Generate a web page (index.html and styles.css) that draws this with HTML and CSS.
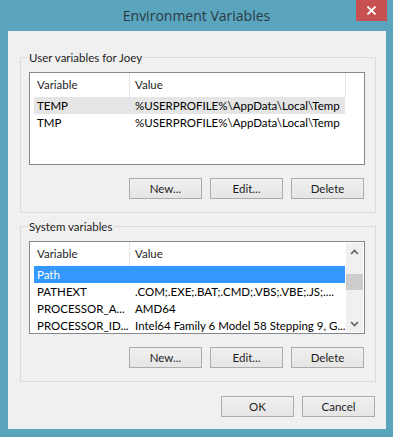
FILE: index.html
```html
<!DOCTYPE html>
<html>
<head>
<meta charset="utf-8">
<link rel="stylesheet" href="styles.css">
</head>
<body>
<div class="window">
  <div class="titlebar">
    <div class="tb-side"></div>
    <div class="title">Environment Variables</div>
    <div class="tb-side tb-right">
      <div class="close">
        <svg width="11" height="9" viewBox="0 0 11 9"><path d="M1.5 0.5 L9.5 8.5 M9.5 0.5 L1.5 8.5" stroke="#fff" stroke-width="1.8" fill="none"/></svg>
      </div>
    </div>
  </div>
  <div class="client">
    <div class="group group-user">
      <div class="legend">User variables for Joey</div>
      <div class="listview lv-user">
        <div class="lv-head">
          <div class="col c1">Variable</div>
          <div class="col c2 hdiv">Value</div>
          <div class="hdiv-end"></div>
        </div>
        <div class="row hover"><div class="col c1">TEMP</div><div class="col c2">%USERPROFILE%\AppData\Local\Temp</div></div>
        <div class="row"><div class="col c1">TMP</div><div class="col c2">%USERPROFILE%\AppData\Local\Temp</div></div>
      </div>
      <div class="btnrow">
        <div class="btn">New...</div>
        <div class="btn">Edit...</div>
        <div class="btn">Delete</div>
      </div>
    </div>
    <div class="group group-sys">
      <div class="legend">System variables</div>
      <div class="listview lv-sys">
        <div class="lv-main">
          <div class="lv-head">
            <div class="col c1">Variable</div>
            <div class="col c2 hdiv">Value</div>
          </div>
          <div class="row selected"><div class="col c1">Path</div><div class="col c2"></div></div>
          <div class="row"><div class="col c1">PATHEXT</div><div class="col c2">.COM;.EXE;.BAT;.CMD;.VBS;.VBE;.JS;....</div></div>
          <div class="row"><div class="col c1">PROCESSOR_A...</div><div class="col c2">AMD64</div></div>
          <div class="row"><div class="col c1">PROCESSOR_ID...</div><div class="col c2">Intel64 Family 6 Model 58 Stepping 9, G...</div></div>
        </div>
        <div class="scrollbar">
          <div class="arrow">
            <svg width="9" height="6" viewBox="0 0 9 6"><path d="M1 5 L4.5 1.5 L8 5" stroke="#606060" stroke-width="1.6" fill="none"/></svg>
          </div>
          <div class="track">
            <div class="thumb"></div>
          </div>
          <div class="arrow">
            <svg width="9" height="6" viewBox="0 0 9 6"><path d="M1 1 L4.5 4.5 L8 1" stroke="#606060" stroke-width="1.6" fill="none"/></svg>
          </div>
        </div>
      </div>
      <div class="btnrow">
        <div class="btn">New...</div>
        <div class="btn">Edit...</div>
        <div class="btn">Delete</div>
      </div>
    </div>
    <div class="dlgbtns">
      <div class="btn">OK</div>
      <div class="btn">Cancel</div>
    </div>
  </div>
</div>
</body>
</html>
```

FILE: styles.css
```css
html, body {
  margin: 0;
  padding: 0;
}
body {
  background: #5aa4be;
  font-family: Lato, "Liberation Sans", sans-serif;
  font-size: 11.5px;
  color: #000;
  width: 393px;
  height: 437px;
  overflow: hidden;
}
.window {
  display: flex;
  flex-direction: column;
  height: 437px;
}
.titlebar {
  height: 31px;
  display: grid;
  grid-template-columns: 1fr auto 1fr;
  padding: 0 6px;
}
.title {
  font-family: "Open Sans", "Noto Sans", sans-serif;
  font-size: 14px;
  color: #2b3a42;
  line-height: 31px;
}
.tb-right {
  display: flex;
  justify-content: flex-end;
}
.close {
  width: 31px;
  height: 21px;
  background: #c75050;
  display: flex;
  align-items: center;
  justify-content: center;
}
.client {
  margin: 0 7px 0 8px;
  height: 398px;
  background: #f0f0f0;
  display: flex;
  flex-direction: column;
  padding: 26px 10px 0 12px;
  box-sizing: border-box;
}
.group {
  border: 1px solid #dcdcdc;
  display: flex;
  flex-direction: column;
  padding: 0 10px 13px 8px;
}
.group-sys {
  margin-top: 13px;
}
.legend {
  align-self: flex-start;
  margin: -8px 0 0 -1px;
  padding: 0 2px 0 1px;
  background: #f0f0f0;
  line-height: 15px;
  height: 15px;
  color: #1e1e1e;
}
.listview {
  border: 1px solid #828790;
  background: #fff;
  height: 93px;
  box-sizing: border-box;
  margin-top: 7px;
}
.lv-sys {
  display: flex;
}
.lv-main {
  flex: 1;
  min-width: 0;
}
.lv-head {
  display: flex;
  height: 24px;
  align-items: center;
  padding-left: 4px;
}
.col {
  padding-left: 3px;
  box-sizing: border-box;
  white-space: nowrap;
  overflow: hidden;
}
.c1 {
  width: 95px;
}
.c2 {
  width: 216px;
}
.lv-head .col {
  color: #1e1e1e;
  height: 24px;
  line-height: 24px;
}
.hdiv {
  border-left: 1px solid #e5e5e5;
  padding-left: 5px;
}
.hdiv-end {
  width: 1px;
  height: 24px;
  background: #e5e5e5;
}
.row {
  display: flex;
  height: 17px;
  line-height: 17px;
  margin-left: 4px;
  width: 311px;
}
.row .c2 {
  padding-left: 6px;
}
.row.hover {
  background: #e5e5e5;
}
.row.selected {
  background: #3399ff;
  color: #fff;
}
.scrollbar {
  width: 17px;
  display: flex;
  flex-direction: column;
  background: #f0f0f0;
  margin: 1px 1px 1px 0;
}
.arrow {
  height: 17px;
  display: flex;
  align-items: center;
  justify-content: center;
}
.track {
  flex: 1;
  padding-top: 14px;
}
.thumb {
  height: 16px;
  background: #cdcdcd;
}
.btnrow {
  display: flex;
  justify-content: flex-end;
  gap: 8px;
  margin-top: 13px;
  padding-right: 1px;
}
.btn {
  width: 73px;
  height: 21px;
  box-sizing: border-box;
  border: 1px solid #acacac;
  background: linear-gradient(#f0f0f0, #e5e5e5);
  text-align: center;
  line-height: 19px;
  color: #1e1e1e;
}
.dlgbtns {
  display: flex;
  justify-content: flex-end;
  gap: 8px;
  margin-top: 14px;
  margin-right: 1px;
}
```
